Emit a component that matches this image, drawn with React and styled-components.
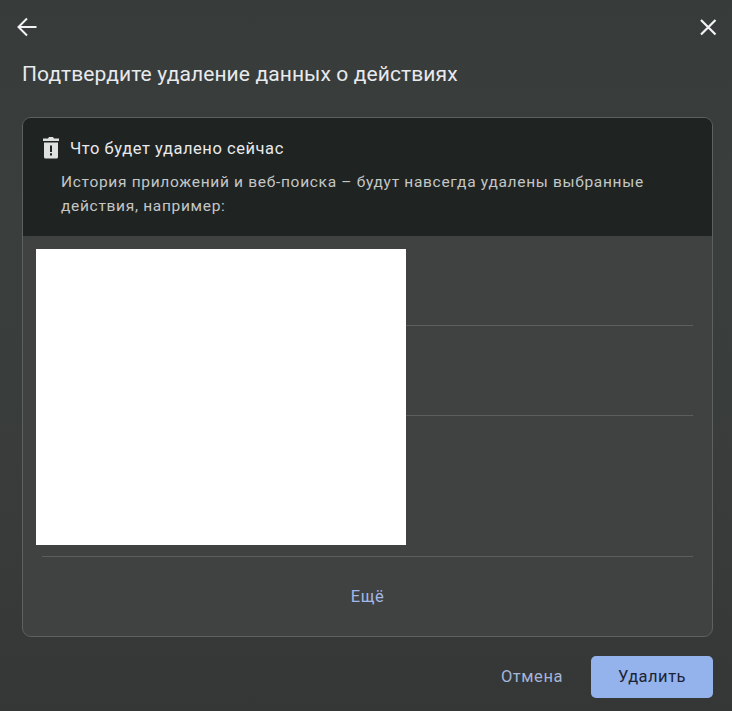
import React from "react";
import styled, { createGlobalStyle } from "styled-components";

const Global = createGlobalStyle`
  html, body { margin: 0; padding: 0; background: #353938; }
  * { box-sizing: border-box; }
`;

const Page = styled.div`
  width: 732px;
  height: 711px;
  overflow: hidden;
  display: flex;
  flex-direction: column;
  background: linear-gradient(180deg, #373c3b 0%, #3a3f3d 30%, #383b3a 75%, #343736 100%);
  font-family: Roboto, "Noto Sans", sans-serif;
  color: #e8eaed;
`;

const TopBar = styled.div`
  display: flex;
  justify-content: space-between;
  align-items: center;
  height: 28px;
  margin-top: 13px;
  padding: 0 11px 0 14px;
`;

const IconButton = styled.button`
  width: 26px;
  height: 28px;
  padding: 0;
  border: 0;
  background: none;
  display: flex;
  align-items: center;
  justify-content: center;
`;

const Title = styled.h1`
  margin: 19px 0 0 22px;
  font-size: 21px;
  line-height: 28px;
  font-weight: 400;
  letter-spacing: 0.1px;
  color: #e8eaed;
`;

const Card = styled.section`
  position: relative;
  margin: 29px 0 0 22px;
  width: 691px;
  height: 520px;
  border: 1.5px solid #5d6160;
  border-radius: 9px;
  overflow: hidden;
  display: flex;
  flex-direction: column;
  background: #404242;
`;

const Notice = styled.div`
  height: 118px;
  flex: none;
  background: #1f2322;
  padding: 16px 0 0 18px;
`;

const NoticeHead = styled.div`
  display: flex;
  align-items: center;
  gap: 9px;
  height: 28px;
  font-size: 16.5px;
  font-weight: 450;
  letter-spacing: 0.55px;
  color: #e8eaed;
`;

const NoticeText = styled.p`
  margin: 8px 0 0 20px;
  width: 610px;
  font-size: 15.5px;
  line-height: 24px;
  letter-spacing: 0.69px;
  color: #c4c7c6;
`;

const Rows = styled.div`
  display: flex;
  flex-direction: column;
  padding: 0 19px 0 19px;
`;

const Row = styled.div`
  height: ${(p) => p.$h}px;
  border-bottom: 1px solid #5b5e5d;
`;

const Redaction = styled.div`
  position: absolute;
  left: 13px;
  top: 130.5px;
  width: 370px;
  height: 296px;
  background: #fff;
`;

const More = styled.button`
  align-self: center;
  margin: 29px 0 0 0;
  padding: 0;
  border: 0;
  background: none;
  font: 450 16.5px/22px Roboto, sans-serif;
  letter-spacing: 0.5px;
  color: #a3b8e6;
`;

const Footer = styled.div`
  display: flex;
  justify-content: flex-end;
  align-items: center;
  gap: 28px;
  margin-top: 19px;
  padding-right: 19px;
`;

const Cancel = styled.button`
  padding: 0;
  border: 0;
  background: none;
  font: 400 16.5px/22px Roboto, sans-serif;
  letter-spacing: 0.55px;
  color: #a4b5d8;
`;

const Primary = styled.button`
  width: 122px;
  height: 42px;
  border: 0;
  border-radius: 5px;
  background: #94b2ec;
  font: 450 16.5px/22px Roboto, sans-serif;
  letter-spacing: 0.5px;
  color: #1c2434;
`;

export default function App() {
  return (
    <Page>
      <Global />
      <TopBar>
        <IconButton aria-label="Назад">
          <svg width="22" height="22" viewBox="0 0 22 22" fill="none" stroke="#f1f3f4" strokeWidth="2">
            <path d="M20.500 11H3M11 2.500 2.500 11l8.500 8.500" />
          </svg>
        </IconButton>
        <IconButton aria-label="Закрыть">
          <svg width="20" height="20" viewBox="0 0 20 20" fill="none" stroke="#f1f3f4" strokeWidth="2.200">
            <path d="M3 3l14.500 14.500M17.500 3L3 17.500" />
          </svg>
        </IconButton>
      </TopBar>
      <Title>Подтвердите удаление данных о действиях</Title>
      <Card>
        <Notice>
          <NoticeHead>
            <svg width="20" height="22" viewBox="0 0 20 22" aria-hidden="true">
              <path fill="#dfe1e1" d="M2 1.500h5L8 0h4l1 1.500h5V4H2zM3 5.500h14V20a1.500 1.500 0 0 1-1.500 1.500h-11A1.500 1.500 0 0 1 3 20z" />
              <path fill="#1f2322" d="M9 8.500h2v6.500H9zM9 16.200h2v2.200H9z" />
            </svg>
            Что будет удалено сейчас
          </NoticeHead>
          <NoticeText>
            История приложений и веб-поиска – будут навсегда удалены выбранные действия, например:
          </NoticeText>
        </Notice>
        <Rows>
          <Row $h={90} />
          <Row $h={90} />
          <Row $h={141} />
        </Rows>
        <Redaction />
        <More>Ещё</More>
      </Card>
      <Footer>
        <Cancel>Отмена</Cancel>
        <Primary>Удалить</Primary>
      </Footer>
    </Page>
  );
}
